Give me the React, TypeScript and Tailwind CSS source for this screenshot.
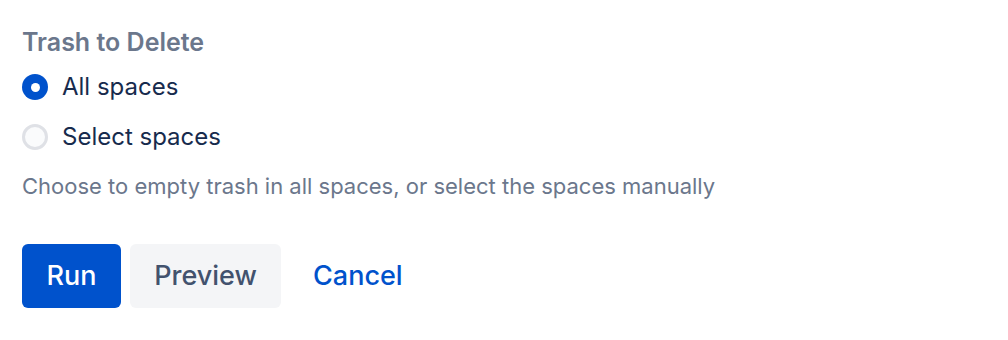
import React, { useState } from "react";

export default function App() {
  const [sel, setSel] = useState("all");
  const font = { fontFamily: "Inter, 'Noto Sans', sans-serif" };
  return (
    <div className="w-[1008px] h-[340px] bg-white pl-[22px] pt-[28px]" style={font}>
      <div className="text-[25px] leading-[28px] font-semibold text-[#6B778C]">Trash to Delete</div>
      <div className="mt-[6px] flex flex-col">
        {[
          { id: "all", label: "All spaces" },
          { id: "select", label: "Select spaces" },
        ].map((o) => (
          <label key={o.id} className="flex items-center h-[50px] gap-[14px] cursor-pointer" onClick={() => setSel(o.id)}>
            {sel === o.id ? (
              <span className="w-[26px] h-[26px] rounded-full bg-[#0052CC] flex items-center justify-center">
                <span className="w-[9px] h-[9px] rounded-full bg-white" />
              </span>
            ) : (
              <span className="w-[26px] h-[26px] rounded-full bg-[#FAFBFC] border-[3px] border-[#DFE1E6]" />
            )}
            <span className="text-[24px] text-[#172B4D]">{o.label}</span>
          </label>
        ))}
      </div>
      <div className="mt-[10px] text-[22px] leading-[28px] text-[#6B778C]">
        Choose to empty trash in all spaces, or select the spaces manually
      </div>
      <div className="mt-[44px] flex items-center gap-[9px]">
        <button className="h-[64px] w-[99px] rounded-[6px] bg-[#0052CC] text-white text-[27px] font-medium">Run</button>
        <button className="h-[64px] w-[151px] rounded-[6px] bg-[#F4F5F7] text-[#42526E] text-[27px] font-medium">Preview</button>
        <button className="h-[64px] px-[23px] rounded-[6px] text-[#0052CC] text-[27px] font-medium">Cancel</button>
      </div>
    </div>
  );
}
